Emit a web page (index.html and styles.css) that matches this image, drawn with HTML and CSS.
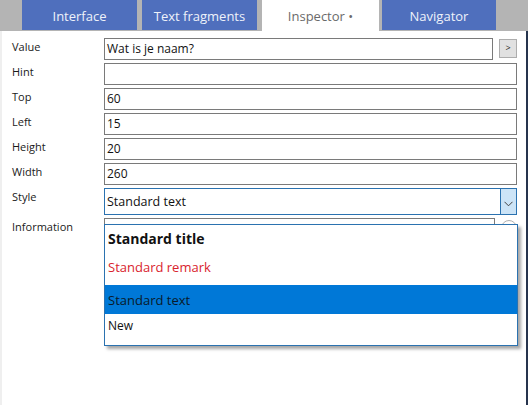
FILE: index.html
```html
<!DOCTYPE html>
<html>
<head>
<meta charset="utf-8">
<link rel="stylesheet" href="styles.css">
</head>
<body>
<div class="app">
  <div class="tabs">
    <div class="tab">Interface</div>
    <div class="tab">Text fragments</div>
    <div class="tab active">Inspector •</div>
    <div class="tab nav">Navigator</div>
  </div>
  <div class="content">
    <div class="form">
      <div class="label">Value</div>
      <div class="field-row">
        <div class="input">Wat is je naam?</div>
        <div class="btn">&gt;</div>
      </div>
      <div class="label">Hint</div>
      <div class="input"></div>
      <div class="label">Top</div>
      <div class="input">60</div>
      <div class="label">Left</div>
      <div class="input">15</div>
      <div class="label">Height</div>
      <div class="input">20</div>
      <div class="label">Width</div>
      <div class="input">260</div>
      <div class="label">Style</div>
      <div class="select">
        <div class="select-text">Standard text</div>
        <div class="select-btn">
          <svg width="9" height="6" viewBox="0 0 9 6"><path d="M0.5 0.8 L4.5 4.8 L8.5 0.8" fill="none" stroke="#444" stroke-width="1"/></svg>
        </div>
      </div>
      <div class="label">Information</div>
      <div class="field-row">
        <div class="input"></div>
        <div class="round"></div>
      </div>
    </div>
    <div class="popup">
      <div class="item title">Standard title</div>
      <div class="item remark">Standard remark</div>
      <div class="item selected">Standard text</div>
      <div class="item new">New</div>
    </div>
  </div>
</div>
</body>
</html>
```
FILE: styles.css
```css
html, body {
  margin: 0;
  padding: 0;
  background: #ffffff;
}
body {
  width: 528px;
  height: 405px;
  overflow: hidden;
  font-family: "Open Sans", "Noto Sans", sans-serif;
}
.app {
  width: 528px;
  height: 405px;
  display: flex;
  flex-direction: column;
}
.tabs {
  height: 31px;
  flex: none;
  background: #b4b4b4;
  display: flex;
  padding-left: 22px;
  gap: 5px;
  box-sizing: border-box;
}
.tab {
  width: 115px;
  height: 30px;
  background: #4f6fbd;
  color: #eef2fa;
  font-size: 13px;
  display: flex;
  align-items: center;
  justify-content: center;
  padding-top: 1px;
  box-sizing: border-box;
}
.tab.active {
  width: 117px;
  height: 31px;
  background: #ffffff;
  color: #6a6a6a;
  padding-bottom: 1px;
}
.tab.nav {
  width: 114px;
  margin-left: -2px;
}
.content {
  flex: 1;
  position: relative;
  border-left: 2px solid #efefef;
  border-right: 2px solid #26344d;
  background: #ffffff;
}
.form {
  display: grid;
  grid-template-columns: 92px 1fr;
  row-gap: 3px;
  padding: 7px 9px 0 10px;
}
.label {
  font-size: 11px;
  line-height: 15px;
  padding-top: 1px;
  color: #1a1a1a;
}
.field-row {
  display: flex;
  align-items: flex-start;
  gap: 6px;
}
.field-row .input {
  flex: 1;
}
.input {
  height: 22px;
  box-sizing: border-box;
  border: 1px solid #7a7a7a;
  font-size: 12px;
  line-height: 19px;
  padding-left: 2px;
  color: #111;
}
.btn {
  width: 18px;
  height: 19px;
  margin-top: 1px;
  box-sizing: border-box;
  background: #e1e1e1;
  border: 1px solid #adadad;
  font-size: 9px;
  line-height: 16px;
  text-align: center;
  color: #222;
}
.round {
  width: 16px;
  height: 16px;
  margin-top: 2px;
  box-sizing: border-box;
  border: 1.5px solid #b0b0b0;
  border-radius: 50%;
}
.select {
  height: 27px;
  box-sizing: border-box;
  border: 1px solid #2b72b0;
  display: flex;
}
.select-text {
  flex: 1;
  font-size: 12.5px;
  line-height: 26px;
  padding-left: 2px;
  color: #111;
}
.select-btn {
  width: 16px;
  background: #cce4f7;
  border-left: 1px solid #2b72b0;
  display: flex;
  align-items: flex-end;
  justify-content: center;
  padding-bottom: 7px;
  box-sizing: border-box;
}
.popup {
  position: absolute;
  left: 102px;
  top: 193px;
  width: 414px;
  height: 122px;
  box-sizing: border-box;
  border: 1px solid #2b72b0;
  background: #ffffff;
  box-shadow: 3px 3px 3px rgba(0, 0, 0, 0.35);
  display: flex;
  flex-direction: column;
}
.item {
  padding-left: 3px;
  display: flex;
  align-items: center;
  color: #111;
}
.item.title {
  height: 28px;
  font-size: 14px;
  font-weight: 700;
  padding-bottom: 2px;
  box-sizing: border-box;
}
.item.remark {
  height: 32px;
  font-size: 13px;
  color: #d9232e;
  padding-bottom: 4px;
  box-sizing: border-box;
}
.item.selected {
  height: 29px;
  font-size: 13px;
  background: #0078d7;
  color: #0a1a2a;
}
.item.new {
  height: 31px;
  font-size: 12px;
  padding-bottom: 8px;
  box-sizing: border-box;
}
```
